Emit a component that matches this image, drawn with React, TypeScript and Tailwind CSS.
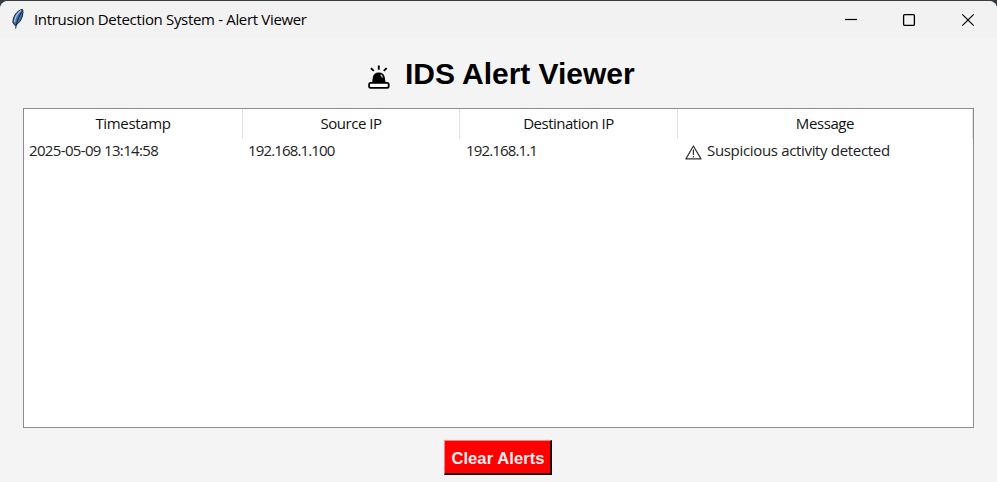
const columns = [
  { label: 'Timestamp', cls: 'w-[219px]', track: 'tracking-[-0.35px]' },
  { label: 'Source IP', cls: 'w-[217px]', track: 'tracking-[-0.45px]' },
  { label: 'Destination IP', cls: 'w-[218px]', track: 'tracking-[-0.5px]' },
  { label: 'Message', cls: 'w-[295px]', track: 'tracking-[-0.4px]' },
];

function Feather() {
  return (
    <svg width="14" height="22" viewBox="0 0 14 22" className="ml-[11px] mt-[7px] shrink-0">
      <path d="M11.3 1.3C6 2.5 1.8 8.5 1.9 14.5L4 17.5C8.5 15.5 12.8 9 11.8 2Z" fill="#3f71ad" stroke="#14202f" strokeWidth="1" />
      <path d="M10 2.5C6.5 5 4 9.5 3.5 14" fill="none" stroke="#a8c6e8" strokeWidth="1.3" />
      <path d="M10.8 3.5C8.5 8 5.5 13 4.6 20.5" fill="none" stroke="#17212c" strokeWidth="1" />
    </svg>
  );
}

function Siren() {
  return (
    <svg width="24" height="26" viewBox="0 0 24 26" className="mt-[7px] shrink-0">
      <path d="M5 19 5.8 13.4a6.1 6.1 0 0 1 12 0L18.6 19Z" fill="#000" />
      <path d="M13.6 10.8q1.6.8 1.8 2.7" fill="none" stroke="#ddd" strokeWidth="1.2" />
      <rect x="2.1" y="18.8" width="19.6" height="5" rx="1.6" fill="#fff" stroke="#000" strokeWidth="1.8" />
      <path d="M11.8 1.5v4.2M6.8 6.9 3.9 4.1M16.8 6.9l2.9-2.8" fill="none" stroke="#000" strokeWidth="1.9" />
    </svg>
  );
}

function Warning() {
  return (
    <svg width="17" height="15" viewBox="0 0 17 15" className="mr-[5px] shrink-0">
      <path d="M8.4 1 16 13.9H.9Z" fill="none" stroke="#333" strokeWidth="1.2" strokeLinejoin="round" />
      <path d="M8.4 4.4v5.5M8.4 11v1.4" stroke="#333" strokeWidth="1.2" />
    </svg>
  );
}

export default function App() {
  return (
    <div className="h-[482px] w-[997px] overflow-hidden bg-[#373c3f] pt-px font-['Open_Sans','Noto_Sans',sans-serif] text-black">
      <div className="flex h-[481px] flex-col rounded-t-[8px] bg-[#f4f4f4]">
        <header className="flex h-[37px] shrink-0 rounded-t-[8px] bg-[#f2f2f2]">
          <Feather />
          <span className="ml-[9px] mt-[6px] whitespace-nowrap text-[15px] leading-[24px] tracking-[-0.33px]">
            Intrusion Detection System - Alert Viewer
          </span>
          <svg width="177" height="37" viewBox="820 1 177 37" className="ml-auto shrink-0" fill="none" stroke="#000" strokeWidth="1.2">
            <path d="M845 19.5h12" />
            <rect x="903.6" y="14.6" width="10.8" height="10.8" rx="1" strokeWidth="1.3" />
            <path d="m962.3 14.3 11.4 11.4m0-11.4-11.4 11.4" />
          </svg>
        </header>

        <h1 className="flex h-[70px] shrink-0 pl-[367px] pt-[19px] font-['Liberation_Sans',Arial,sans-serif] text-[30px] font-bold leading-[34px] tracking-[-0.03px]">
          <Siren />
          <span className="ml-[14px] whitespace-nowrap">IDS Alert Viewer</span>
        </h1>

        <main className="ml-[23px] h-[320px] w-[951px] shrink-0 border border-[#8a8c92] bg-white text-[15px]">
          <div className="flex h-[30px]">
            {columns.map((c) => (
              <div key={c.label} className={`${c.cls} shrink-0 border-r border-[#e3e3e3] pt-[3px] text-center leading-[22px] text-[#111]`}>
                <span className={c.track}>{c.label}</span>
              </div>
            ))}
          </div>
          <div className="flex h-[25px] whitespace-nowrap leading-[22px] text-[#222]">
            <div className="w-[219px] pl-[5px] tracking-[-0.65px]">2025-05-09 13:14:58</div>
            <div className="w-[217px] pl-[5px] tracking-[-0.85px]">192.168.1.100</div>
            <div className="w-[218px] pl-[6px] tracking-[-0.85px]">192.168.1.1</div>
            <div className="flex w-[295px] pl-[7px]">
              <div className="pt-[6px]"><Warning /></div>
              <span className="tracking-[-0.33px]">Suspicious activity detected</span>
            </div>
          </div>
        </main>

        <button className="ml-[444px] mt-[12px] h-[35px] w-[108px] shrink-0 whitespace-nowrap border-2 border-l border-t border-b-[#200000] border-l-[#ff8585] border-r-[#200000] border-t-[#ff8585] bg-[#ff0000] pl-px pt-[2px] font-['Liberation_Sans',Arial,sans-serif] text-[16.5px] font-bold leading-[30px] tracking-[0.1px] text-[#fff0f0]">
          Clear Alerts
        </button>
      </div>
    </div>
  );
}
